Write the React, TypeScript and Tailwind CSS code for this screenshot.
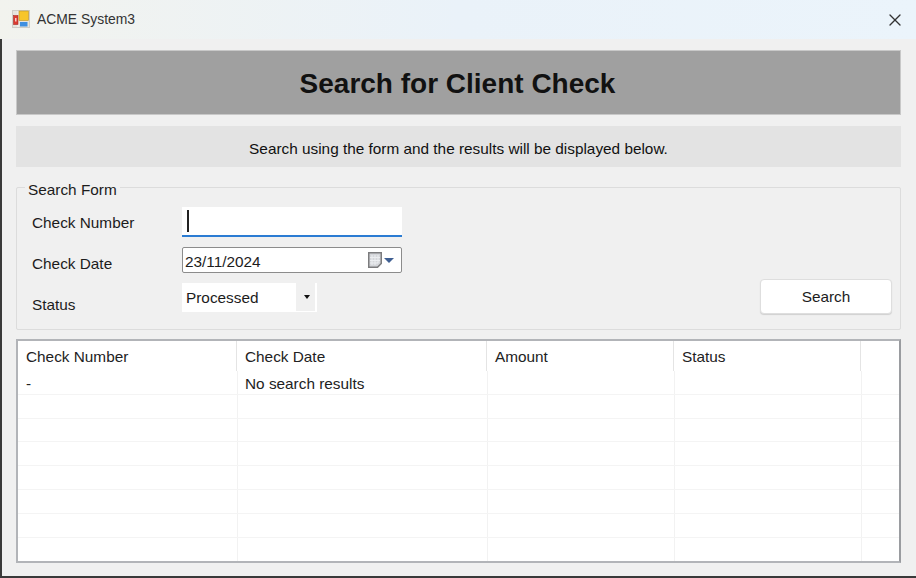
import { X } from "lucide-react";

const columns = [
  { label: "Check Number", head: "w-[219px]", cell: "w-[220px] pl-[8px]" },
  { label: "Check Date", head: "w-[250px]", cell: "w-[250px] pl-[7px]" },
  { label: "Amount", head: "w-[187px]", cell: "w-[187px] pl-[7px]" },
  { label: "Status", head: "w-[187px]", cell: "w-[187px] pl-[7px]" },
  { label: "", head: "flex-1", cell: "flex-1" },
];

const rows = [
  ["-", "No search results", "", "", ""],
  ["", "", "", "", ""],
  ["", "", "", "", ""],
  ["", "", "", "", ""],
  ["", "", "", "", ""],
  ["", "", "", "", ""],
  ["", "", "", "", ""],
  ["", "", "", "", ""],
];

function AppIcon() {
  return (
    <svg width="18" height="18" viewBox="0 0 18 18" className="shrink-0">
      <rect x="0.5" y="0.5" width="17" height="17" fill="#e6e4de" stroke="#cfcdc7" />
      <path d="M1 5.5H6M12 1V6M1 13.5H6M6 1V17" stroke="#f7f6f2" strokeWidth="1" />
      <rect x="1.5" y="5.5" width="4.5" height="9" fill="#dc3a30" stroke="#a52a25" strokeWidth="0.6" />
      <rect x="3" y="8" width="1.5" height="3.5" fill="#f5cdc8" />
      <rect x="7" y="1" width="9.5" height="9.5" fill="#f7c52b" stroke="#b9912a" strokeWidth="0.6" />
      <rect x="8" y="12" width="7.5" height="4.5" fill="#3f8fe0" />
    </svg>
  );
}

function CalendarIcon() {
  return (
    <svg width="14" height="16" viewBox="0 0 14 16">
      <path d="M0.75 0.75H13.25V11.5L9.5 15.25H0.75Z" fill="#d4d6da" stroke="#7c7c7e" strokeWidth="1.5" />
      <path d="M4 3V13M7 3V13M10 3V11M2 5.5H12M2 8.5H12M2 11H10" stroke="#eceef1" strokeWidth="1" />
    </svg>
  );
}

export default function App() {
  return (
    <div className="flex h-[578px] w-[916px] flex-col overflow-hidden bg-[#f0f0f0] font-['Liberation_Sans',sans-serif] text-[15.35px] text-[#1c1c1c]">
      <div className="flex h-[39px] shrink-0 items-center justify-between bg-gradient-to-r from-[#f2f3ee] via-[#eaf2f9] to-[#ebf4fb] pl-[12px] pr-[11px]">
        <div className="flex items-center gap-[7px]">
          <AppIcon />
          <span className="text-[13.9px] text-[#333333]">ACME System3</span>
        </div>
        <X size={20} strokeWidth={1.6} className="text-[#333333]" />
      </div>

      <div className="flex flex-1 flex-col border-b-2 border-l-2 border-[#3a3a3a] pl-[14px] pr-[15px] pt-[11px]">
        <div className="flex h-[65px] shrink-0 items-center justify-center border border-[#c8c8c8] bg-[#a0a0a0] pr-[2px] pt-[2px]">
          <h1 className="text-[28px] font-bold text-[#111111]">Search for Client Check</h1>
        </div>

        <div className="mt-[11px] flex h-[41px] shrink-0 items-center justify-center bg-[#e3e3e3] pt-[4px]">
          <p className="text-[#111111]">Search using the form and the results will be displayed below.</p>
        </div>

        <div className="relative mt-[20px] h-[143px] shrink-0 rounded-[2px] border border-[#dcdcdc]">
          <span className="absolute left-[8px] top-[-7px] bg-[#f0f0f0] px-[3px] leading-[18px]">
            Search Form
          </span>

          <div className="flex h-full items-end justify-between pb-[15px] pl-[15px] pr-[9px]">
            <div className="mb-[2px] flex flex-col">
              <div className="flex h-[30px] items-center">
                <label className="w-[150px] pt-[2px]">Check Number</label>
                <div className="flex h-[30px] w-[220px] items-center border-b-2 border-[#2b7cd3] bg-white pl-[5px]">
                  <span className="h-[22px] w-[1.5px] bg-[#222222]" />
                </div>
              </div>
              <div className="mt-[10px] flex h-[26px] items-center">
                <label className="w-[150px] pt-[6px]">Check Date</label>
                <div className="flex h-[26px] w-[220px] items-center justify-between rounded-[2px] border border-[#8c8c8c] bg-white pl-[2px] pr-[7px]">
                  <span className="pt-[2px]">23/11/2024</span>
                  <div className="flex items-center gap-[2px]">
                    <CalendarIcon />
                    <span className="h-0 w-0 border-x-[5px] border-t-[5px] border-x-transparent border-t-[#3f5f92]" />
                  </div>
                </div>
              </div>
              <div className="mt-[10px] flex h-[29px] items-center">
                <label className="w-[150px] pt-[13px]">Status</label>
                <div className="flex h-[29px] w-[135px] items-center bg-white pb-[1px] pr-[2px]">
                  <span className="flex-1 pl-[4px] pt-[2px]">Processed</span>
                  <div className="flex h-full w-[19px] items-center justify-center bg-[#f0f0f0] pl-[2px]">
                    <span className="h-0 w-0 border-x-[3px] border-t-[4px] border-x-transparent border-t-[#111111]" />
                  </div>
                </div>
              </div>
            </div>
            <button className="mr-[-1px] h-[35px] w-[132px] rounded-[4px] border border-[#dedede] bg-white pt-[1px] text-[#1c1c1c] shadow-[0_1px_1px_#d0d0d0]">
              Search
            </button>
          </div>
        </div>

        <div className="mt-[9px] flex h-[224px] shrink-0 flex-col border-2 border-[#b2b4b8] border-r-[#9a9ca0] bg-white">
          <div className="flex h-[30px] shrink-0">
            {columns.map((col, i) => (
              <div
                key={i}
                className={`${col.head} flex items-center border-r border-[#e4e4e4] pl-[8px] pt-[2px] text-[#222222] last:border-r-0`}
              >
                {col.label}
              </div>
            ))}
          </div>
          {rows.map((row, r) => (
            <div key={r} className="flex h-[23.8px] shrink-0 border-b border-[#f4f4f4] last:border-b-0">
              {row.map((cell, i) => (
                <div
                  key={i}
                  className={`${columns[i].cell} flex items-center border-r border-[#f2f2f2] pt-[3px] text-[#222222] last:border-r-0`}
                >
                  {cell}
                </div>
              ))}
            </div>
          ))}
        </div>
      </div>
    </div>
  );
}
